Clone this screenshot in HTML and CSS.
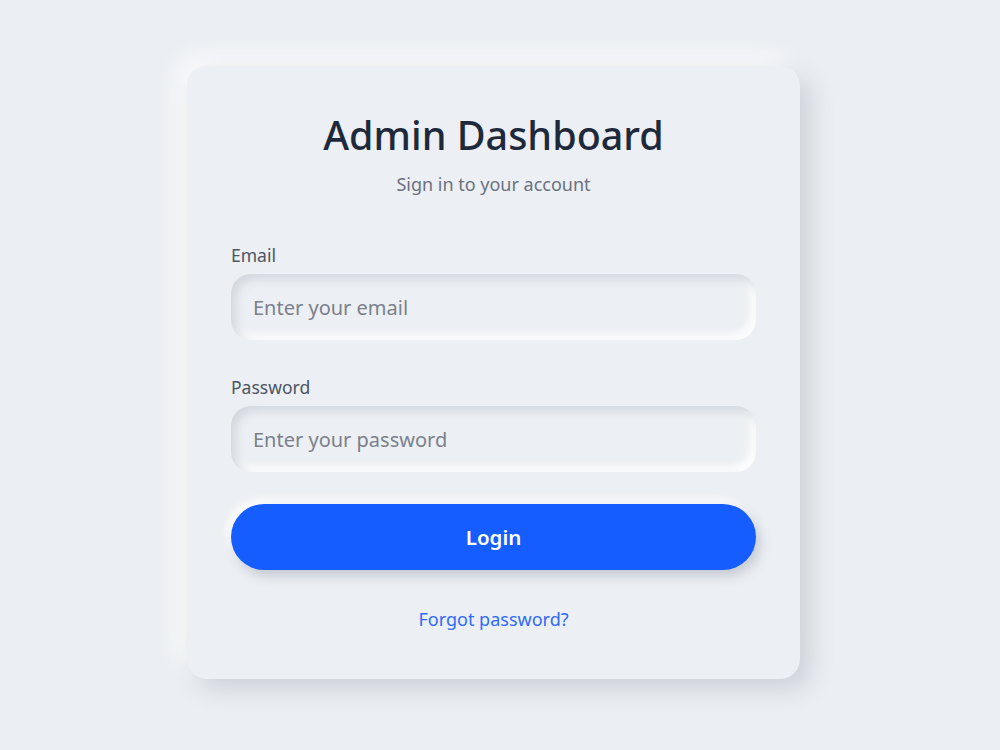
FILE: index.html
```html
<!DOCTYPE html>
<html lang="en">
<head>
<meta charset="utf-8">
<title>Admin Dashboard</title>
<link rel="stylesheet" href="styles.css">
</head>
<body>
  <main class="stage">
    <form class="card" onsubmit="return false">
      <header class="card-head">
        <h1 class="title">Admin Dashboard</h1>
        <p class="subtitle">Sign in to your account</p>
      </header>

      <div class="field">
        <label class="label" for="email">Email</label>
        <input class="input" id="email" type="email" placeholder="Enter your email">
      </div>

      <div class="field">
        <label class="label" for="password">Password</label>
        <input class="input" id="password" type="password" placeholder="Enter your password">
      </div>

      <button class="btn-login" type="submit">Login</button>

      <a class="forgot" href="#">Forgot password?</a>
    </form>
  </main>
</body>
</html>
```

FILE: styles.css
```css
* {
  box-sizing: border-box;
}

html,
body {
  margin: 0;
  height: 100%;
}

body {
  background: #ebeef2;
  font-family: "Noto Sans", "Open Sans", sans-serif;
  color: #1f2937;
}

.stage {
  min-height: 100%;
  display: flex;
  align-items: center;
  justify-content: center;
  padding: 0 13px 5px 0;
}

/* neumorphic card */
.card {
  width: 613px;
  height: 613px;
  padding: 46px 44px 0;
  background: #eceff3;
  border-radius: 20px;
  box-shadow: 10px 10px 24px #cdd1d8, -10px -10px 24px #fbfcfd;
  display: flex;
  flex-direction: column;
}

.card-head {
  text-align: center;
  margin-bottom: 47px;
}

.title {
  margin: 0;
  font-size: 39.5px;
  font-weight: 500;
  line-height: 1.2;
  color: #1e293b;
}

.subtitle {
  margin: 13px 0 0;
  font-size: 18px;
  color: #6b7280;
}

.field {
  display: flex;
  flex-direction: column;
  margin-bottom: 35px;
}

.label {
  font-size: 17.5px;
  color: #4b5563;
  margin-bottom: 7px;
}

.input {
  height: 66px;
  border: none;
  outline: none;
  border-radius: 20px;
  padding: 0 22px;
  background: #eceff3;
  font-family: inherit;
  font-size: 20px;
  color: #374151;
  box-shadow: inset 5px 5px 10px #d3d8df, inset -5px -5px 10px #ffffff;
}

.input::placeholder {
  color: #7b818a;
}

.btn-login {
  margin-top: -3px;
  height: 66px;
  border: none;
  border-radius: 33px;
  background: #165dff;
  color: #ffffff;
  font-family: inherit;
  font-size: 20.5px;
  font-weight: 600;
  box-shadow: 4px 6px 12px #c4cad3, -4px -4px 10px #ffffff;
  cursor: pointer;
}

.forgot {
  margin-top: 37px;
  align-self: center;
  font-size: 18px;
  color: #2f6bff;
  text-decoration: none;
}
```
